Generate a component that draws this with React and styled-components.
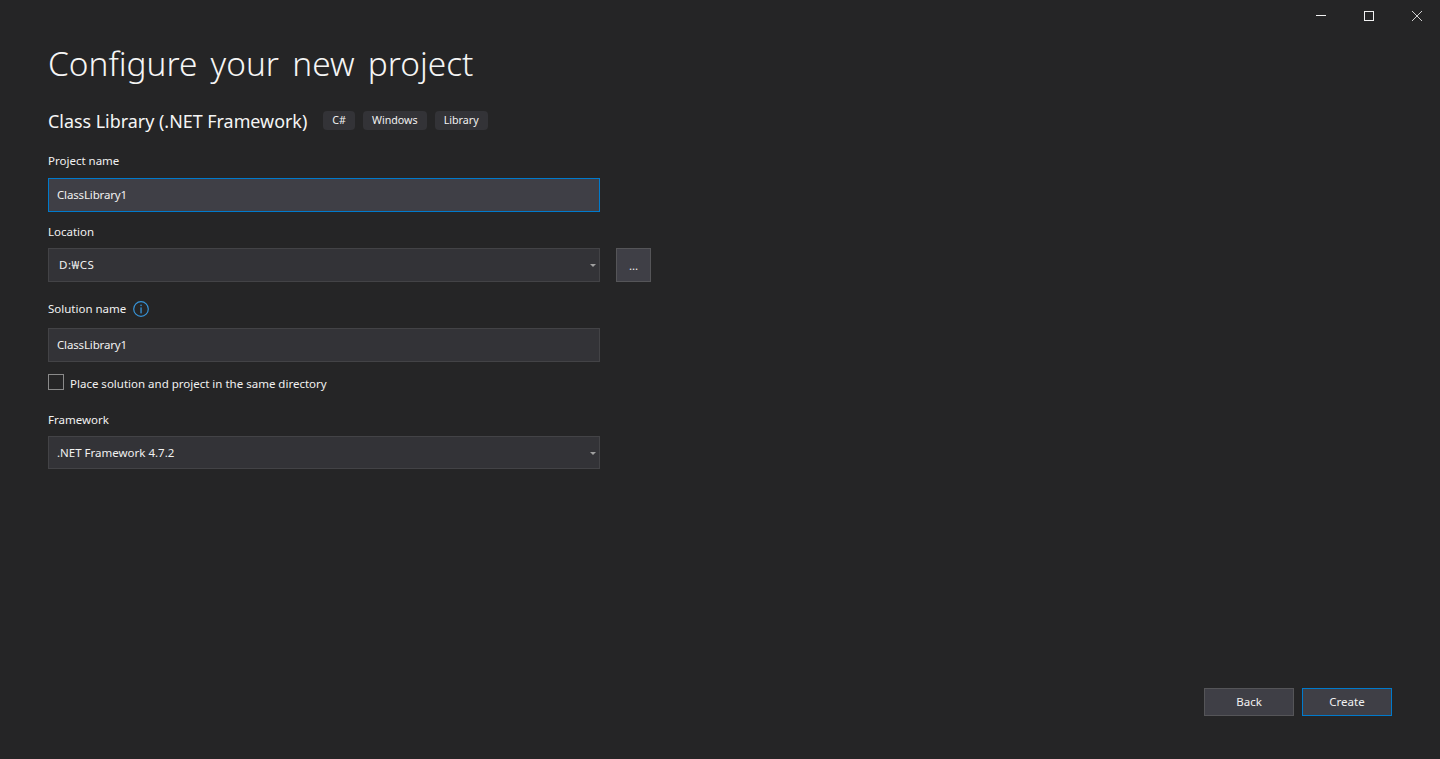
import styled, { createGlobalStyle } from "styled-components"

const GlobalStyle = createGlobalStyle`
  html, body {
    margin: 0;
    padding: 0;
    height: 100%;
    background: #252526;
  }

  * {
    box-sizing: border-box;
  }
`

const App = () => {
  return (
    <>
      <GlobalStyle />
      <Page>
        <WindowControls>
          <WindowButton aria-label="Minimize">
            <svg width="12" height="12" viewBox="0 0 12 12"><path d="M2 5.5h10" stroke="#f1f1f1" fill="none" /></svg>
          </WindowButton>
          <WindowButton aria-label="Maximize">
            <svg width="12" height="12" viewBox="0 0 12 12"><rect x="2.5" y="1.5" width="9" height="9" stroke="#f1f1f1" fill="none" /></svg>
          </WindowButton>
          <WindowButton aria-label="Close">
            <svg width="12" height="12" viewBox="0 0 12 12"><path d="M2 1l10 10M12 1L2 11" stroke="#d0d0d0" fill="none" /></svg>
          </WindowButton>
        </WindowControls>

        <Content>
          <Title>Configure your new project</Title>

          <TemplateRow>
            <TemplateName>Class Library (.NET Framework)</TemplateName>
            <Tags>
              <Tag>C#</Tag>
              <Tag>Windows</Tag>
              <Tag>Library</Tag>
            </Tags>
          </TemplateRow>

          <Label $top={16} $bottom={9}>Project name</Label>
          <Field $focused $tracking={-0.15}>ClassLibrary1</Field>

          <Label $top={10} $bottom={8}>Location</Label>
          <LocationRow>
            <Field $indent={10} $tracking={0.5}>
              D:₩CS
              <Caret />
            </Field>
            <BrowseButton>...</BrowseButton>
          </LocationRow>

          <SolutionLabel>
            <span>Solution name</span>
            <svg width="16" height="16" viewBox="0 0 16 16" fill="none">
              <circle cx="8" cy="8" r="7.3" stroke="#3794d8" strokeWidth="1.2" />
              <rect x="7.4" y="3.6" width="1.3" height="1.5" fill="#3794d8" />
              <rect x="7.4" y="6.4" width="1.3" height="6" fill="#3794d8" />
            </svg>
          </SolutionLabel>
          <Field $tracking={-0.15}>ClassLibrary1</Field>

          <CheckRow>
            <CheckBox />
            <span>Place solution and project in the same directory</span>
          </CheckRow>

          <Label $top={18} $bottom={8}>Framework</Label>
          <Field $short>
            .NET Framework 4.7.2
            <Caret />
          </Field>
        </Content>

        <Footer>
          <FooterButton>Back</FooterButton>
          <FooterButton $primary>Create</FooterButton>
        </Footer>
      </Page>
    </>
  )
}

export default App

const Page = styled.div`
  display: flex;
  flex-direction: column;
  height: 759px;
  background: #252526;
  color: #f1f1f1;
  font-family: "Noto Sans", "Noto Sans CJK KR", sans-serif;
  font-size: 11.5px;
  overflow: hidden;
`

const WindowControls = styled.div`
  display: flex;
  justify-content: flex-end;
`

const WindowButton = styled.div`
  width: 48px;
  height: 32px;
  display: flex;
  align-items: center;
  justify-content: center;
`

const Content = styled.div`
  padding-left: 48px;
  width: 700px;
`

const Title = styled.h1`
  margin: 6px 0 0;
  height: 50px;
  font-size: 33.4px;
  line-height: 50px;
  font-weight: 300;
  word-spacing: 4.6px;
  color: #f5f5f5;
  white-space: nowrap;
`

const TemplateRow = styled.div`
  display: flex;
  align-items: center;
  gap: 16px;
  margin-top: 19px;
  height: 28px;
`

const TemplateName = styled.h2`
  margin: 0;
  font-size: 17.9px;
  line-height: 28px;
  font-weight: 400;
  color: #f5f5f5;
  white-space: nowrap;
`

const Tags = styled.div`
  display: flex;
  gap: 8px;
  margin-bottom: 1px;
`

const Tag = styled.span`
  display: flex;
  align-items: center;
  height: 19px;
  padding: 0 9px 2px;
  border-radius: 4px;
  background: #333337;
  font-size: 10.7px;
  color: #f1f1f1;
`

const Label = styled.div`
  margin-top: ${props => props.$top}px;
  margin-bottom: ${props => props.$bottom}px;
  height: 18px;
  padding-top: 1px;
  line-height: 17px;
  color: #f1f1f1;
`

const SolutionLabel = styled.div`
  display: flex;
  align-items: center;
  gap: 7px;
  margin-top: 17px;
  margin-bottom: 11px;
  height: 18px;
  padding-top: 2px;
  line-height: 16px;
`

const LocationRow = styled.div`
  display: flex;
  gap: 16px;
`

const Field = styled.div`
  position: relative;
  display: flex;
  align-items: center;
  width: 552px;
  height: ${props => props.$short ? 33 : 34}px;
  padding-left: ${props => props.$indent || 8}px;
  padding-bottom: ${props => props.$short ? 0 : 2}px;
  background: ${props => props.$focused ? "#3f3f46" : "#333337"};
  border: 1px solid ${props => props.$focused ? "#007acc" : "#434346"};
  letter-spacing: ${props => props.$tracking || 0}px;
  color: #f1f1f1;
`

const Caret = styled.span`
  position: absolute;
  right: 3px;
  top: 50%;
  margin-top: -1px;
  border-left: 3px solid transparent;
  border-right: 3px solid transparent;
  border-top: 3px solid #a0a0a0;
`

const BrowseButton = styled.div`
  display: flex;
  align-items: center;
  justify-content: center;
  width: 35px;
  height: 34px;
  background: #3f3f46;
  border: 1px solid #555558;
`

const CheckRow = styled.div`
  display: flex;
  align-items: center;
  gap: 6px;
  margin-top: 12px;
  height: 18px;
`

const CheckBox = styled.span`
  width: 16px;
  height: 16px;
  margin-top: -2px;
  background: #252526;
  border: 1px solid #8a8a8a;
`

const Footer = styled.div`
  display: flex;
  justify-content: flex-end;
  gap: 8px;
  margin-top: auto;
  padding: 0 48px 43px 0;
`

const FooterButton = styled.div`
  display: flex;
  align-items: center;
  justify-content: center;
  width: 90px;
  height: 28px;
  padding-bottom: 2px;
  background: #3f3f46;
  border: 1px solid ${props => props.$primary ? "#007acc" : "#555558"};
  color: #f1f1f1;
`
